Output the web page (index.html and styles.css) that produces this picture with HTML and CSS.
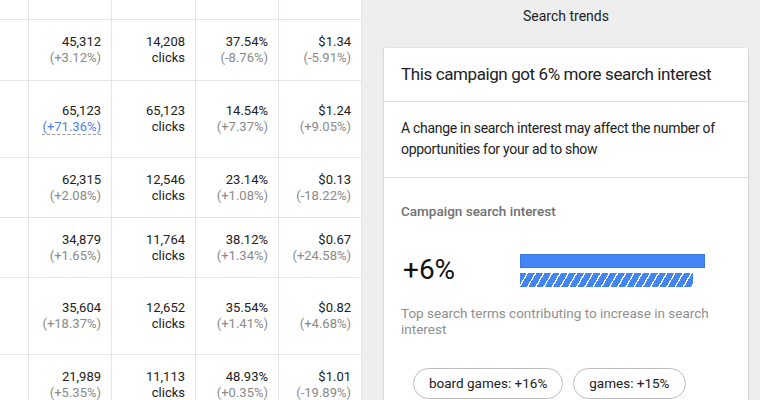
FILE: index.html
```html
<!DOCTYPE html>
<html lang="en">
<head>
    <meta charset="UTF-8">
    <meta name="viewport" content="width=device-width, initial-scale=1.0">
    <title>Search trends</title>
    <link rel="stylesheet" href="styles.css">
</head>
<body>
    <div class="page">
        <!-- campaign table -->
        <div class="stats">
            <div class="cell head"></div><div class="cell head"></div><div class="cell head"></div><div class="cell head"></div><div class="cell head"></div>

            <div class="cell"></div>
            <div class="cell"><span class="val">45,312</span><span class="diff">(+3.12%)</span></div>
            <div class="cell"><span class="val">14,208</span><span class="val">clicks</span></div>
            <div class="cell"><span class="val">37.54%</span><span class="diff">(-8.76%)</span></div>
            <div class="cell"><span class="val">$1.34</span><span class="diff">(-5.91%)</span></div>

            <div class="cell tall"></div>
            <div class="cell tall"><span class="val">65,123</span><span class="diff link">(+71.36%)</span></div>
            <div class="cell tall"><span class="val">65,123</span><span class="val">clicks</span></div>
            <div class="cell tall"><span class="val">14.54%</span><span class="diff">(+7.37%)</span></div>
            <div class="cell tall"><span class="val">$1.24</span><span class="diff">(+9.05%)</span></div>

            <div class="cell short"></div>
            <div class="cell short"><span class="val">62,315</span><span class="diff">(+2.08%)</span></div>
            <div class="cell short"><span class="val">12,546</span><span class="val">clicks</span></div>
            <div class="cell short"><span class="val">23.14%</span><span class="diff">(+1.08%)</span></div>
            <div class="cell short"><span class="val">$0.13</span><span class="diff">(-18.22%)</span></div>

            <div class="cell short"></div>
            <div class="cell short"><span class="val">34,879</span><span class="diff">(+1.65%)</span></div>
            <div class="cell short"><span class="val">11,764</span><span class="val">clicks</span></div>
            <div class="cell short"><span class="val">38.12%</span><span class="diff">(+1.34%)</span></div>
            <div class="cell short"><span class="val">$0.67</span><span class="diff">(+24.58%)</span></div>

            <div class="cell tall"></div>
            <div class="cell tall"><span class="val">35,604</span><span class="diff">(+18.37%)</span></div>
            <div class="cell tall"><span class="val">12,652</span><span class="val">clicks</span></div>
            <div class="cell tall"><span class="val">35.54%</span><span class="diff">(+1.41%)</span></div>
            <div class="cell tall"><span class="val">$0.82</span><span class="diff">(+4.68%)</span></div>

            <div class="cell"></div>
            <div class="cell"><span class="val">21,989</span><span class="diff">(+5.35%)</span></div>
            <div class="cell"><span class="val">11,113</span><span class="val">clicks</span></div>
            <div class="cell"><span class="val">48.93%</span><span class="diff">(+0.35%)</span></div>
            <div class="cell"><span class="val">$1.01</span><span class="diff">(-19.89%)</span></div>
        </div>

        <!-- search trends panel -->
        <aside class="trends">
            <h2>Search trends</h2>
            <div class="card">
                <div class="card-title">This campaign got 6% more search interest</div>
                <div class="card-note">A change in search interest may affect the number of opportunities for your ad to show</div>
                <div class="card-body">
                    <div class="label">Campaign search interest</div>
                    <div class="interest">
                        <div class="big">+6%</div>
                        <div class="bars">
                            <div class="bar" style="width: 185px"></div>
                            <div class="bar hatched" style="width: 173px"></div>
                        </div>
                    </div>
                    <p class="terms-title">Top search terms contributing to increase in search interest</p>
                    <div class="chips">
                        <span class="chip">board games: +16%</span>
                        <span class="chip">games: +15%</span>
                    </div>
                </div>
            </div>
        </aside>
    </div>
</body>
</html>
```

FILE: styles.css
```css
/* global */
* {
    margin: 0;
    padding: 0;
    box-sizing: border-box;
}

body {
    font-family: Roboto, "Liberation Sans", sans-serif;
    color: #212121;
    background-color: #fff;
    overflow: hidden;
    height: 400px;
}

.page {
    display: flex;
    height: 400px;
}

/* table */
.stats {
    flex: none;
    display: grid;
    grid-template-columns: 29px 83px 84px 83px 83px;
    grid-auto-rows: min-content;
    align-content: start;
    background-color: #fff;
}

.cell {
    height: 61px;
    border-right: 1px solid #e3e5ea;
    border-bottom: 1px solid #e3e5ea;
    display: flex;
    flex-direction: column;
    justify-content: center;
    align-items: flex-end;
    padding-right: 10px;
    font-size: 13px;
    line-height: 16px;
}

.cell.head {
    height: 20px;
}

.cell.tall {
    height: 77px;
}

.cell.short {
    height: 60px;
}

.val {
    color: #212121;
}

.diff {
    color: #8a8a8a;
}

.diff.link {
    color: #4a80e8;
    border-bottom: 1px dashed #9a9a9a;
    line-height: 15px;
}

/* search trends panel */
.trends {
    flex: none;
    width: 410px;
    background-color: #eeeeee;
    padding: 0 24px 0 22px;
}

.trends h2 {
    font-size: 14px;
    font-weight: 400;
    line-height: 18px;
    text-align: center;
    color: #212121;
    padding-top: 7px;
    margin-bottom: 23px;
}

.card {
    background-color: #fff;
    box-shadow: 0 1px 2px rgba(0, 0, 0, 0.22), 0 0 1px rgba(0, 0, 0, 0.12);
    height: 380px;
}

.card-title {
    font-size: 17px;
    letter-spacing: -0.4px;
    line-height: 21px;
    padding: 16px 17px;
    border-bottom: 1px solid #e0e0e0;
    color: #202124;
    white-space: nowrap;
}

.card-note {
    font-size: 14px;
    letter-spacing: -0.3px;
    line-height: 21px;
    padding: 16px 17px 17px;
    border-bottom: 1px solid #e0e0e0;
    color: #212121;
}

.card-body {
    padding: 25px 17px 0;
}

.label {
    font-size: 13.5px;
    font-weight: 500;
    line-height: 16px;
    color: #707070;
}

.interest {
    display: flex;
    align-items: center;
    margin-top: 34px;
}

.big {
    width: 119px;
    font-size: 28px;
    line-height: 34px;
    color: #111;
    padding-left: 2px;
}

.bars {
    display: flex;
    flex-direction: column;
    gap: 5px;
}

.bar {
    height: 14px;
    background-color: #4285f4;
    border: 1px solid #3b78e0;
}

.bar.hatched {
    border: none;
    background: repeating-linear-gradient(120deg, #4285f4 0, #4285f4 5.8px, #fff 5.8px, #fff 7.1px);
}

.terms-title {
    margin-top: 18px;
    font-size: 13.5px;
    line-height: 16px;
    color: #8f8f8f;
}

.chips {
    display: flex;
    gap: 10px;
    margin-top: 31px;
    padding-left: 12px;
}

.chip {
    display: inline-block;
    height: 31px;
    line-height: 28px;
    padding: 0 15px;
    border: 1.5px solid #bdbdbd;
    border-radius: 16px;
    font-size: 13.5px;
    color: #212121;
}
```
